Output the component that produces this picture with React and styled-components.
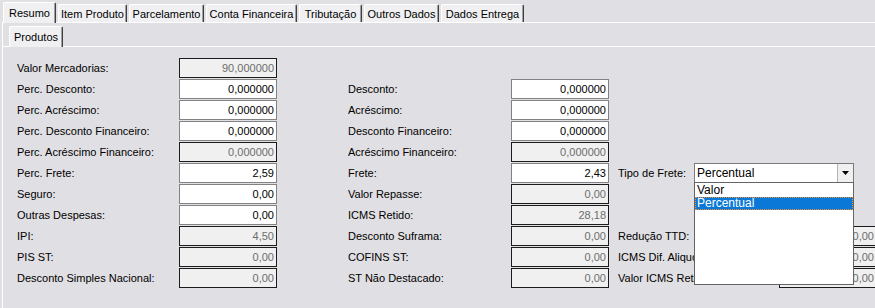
import React from "react";
import styled, { createGlobalStyle } from "styled-components";

const GlobalStyle = createGlobalStyle`
  html, body {
    margin: 0;
    padding: 0;
    background: #e0dfe3;
  }
  body {
    font-family: "Liberation Sans", Arial, sans-serif;
    font-size: 11px;
    color: #000;
  }
`;

const tabs = [
  { title: "Resumo", w: 53, active: true },
  { title: "Item Produto", w: 69 },
  { title: "Parcelamento", w: 75 },
  { title: "Conta Financeira", w: 91 },
  { title: "Tributação", w: 63 },
  { title: "Outros Dados", w: 75 },
  { title: "Dados Entrega", w: 83 },
];

// [row, column group, label, value, disabled]
const fields = [
  [1, 0, "Valor Mercadorias:", "90,000000", true],
  [2, 0, "Perc. Desconto:", "0,000000"],
  [3, 0, "Perc. Acréscimo:", "0,000000"],
  [4, 0, "Perc. Desconto Financeiro:", "0,000000"],
  [5, 0, "Perc. Acréscimo Financeiro:", "0,000000", true],
  [6, 0, "Perc. Frete:", "2,59"],
  [7, 0, "Seguro:", "0,00"],
  [8, 0, "Outras Despesas:", "0,00"],
  [9, 0, "IPI:", "4,50", true],
  [10, 0, "PIS ST:", "0,00", true],
  [11, 0, "Desconto Simples Nacional:", "0,00", true],
  [2, 1, "Desconto:", "0,000000"],
  [3, 1, "Acréscimo:", "0,000000"],
  [4, 1, "Desconto Financeiro:", "0,000000"],
  [5, 1, "Acréscimo Financeiro:", "0,000000", true],
  [6, 1, "Frete:", "2,43"],
  [7, 1, "Valor Repasse:", "0,00", true],
  [8, 1, "ICMS Retido:", "28,18", true],
  [9, 1, "Desconto Suframa:", "0,00", true],
  [10, 1, "COFINS ST:", "0,00", true],
  [11, 1, "ST Não Destacado:", "0,00", true],
  [9, 2, "Redução TTD:", "0,00", true],
  [10, 2, "ICMS Dif. Aliquota:", "0,00", true],
  [11, 2, "Valor ICMS Retido:", "0,00", true],
];

const App = () => {
  return (
    <>
      <GlobalStyle />
      <Window>
        <TabBar>
          {tabs.map((t) => (
            <Tab key={t.title} $w={t.w} $active={t.active}>
              {t.title}
            </Tab>
          ))}
        </TabBar>

        <Page>
          <SubTabBar>
            <Tab $w={54} $active>
              Produtos
            </Tab>
          </SubTabBar>

          <SubPage>
            <FormGrid>
              {fields.map(([row, group, label, value, disabled]) => (
                <React.Fragment key={label}>
                  <Label $row={row} $col={group * 3 + 1}>
                    {label}
                  </Label>
                  <Edit $row={row} $col={group * 3 + 2} $disabled={disabled}>
                    {value}
                  </Edit>
                </React.Fragment>
              ))}

              <ComboField $row={6}>
                <ComboLabel>Tipo de Frete:</ComboLabel>
                <Combo>
                  <ComboText>Percentual</ComboText>
                  <ComboButton>
                    <svg width="7" height="4" viewBox="0 0 7 4">
                      <polygon points="0,0 7,0 3.5,4" fill="#000" />
                    </svg>
                  </ComboButton>
                  <DropList>
                    <DropItem>Valor</DropItem>
                    <DropItem $selected>Percentual</DropItem>
                  </DropList>
                </Combo>
              </ComboField>
            </FormGrid>
          </SubPage>
        </Page>
      </Window>
    </>
  );
};

const Window = styled.div`
  width: 875px;
  height: 308px;
  overflow: hidden;
  background: #e0dfe3;
`;

const TabBar = styled.div`
  height: 22px;
  padding-left: 3px;
  box-sizing: border-box;
  display: flex;
  align-items: flex-end;
  gap: 2px;
`;

const Tab = styled.div`
  position: relative;
  z-index: 1;
  width: ${(p) => p.$w}px;
  height: ${(p) => (p.$active ? 21 : 18)}px;
  margin-bottom: ${(p) => (p.$active ? -1 : 0)}px;
  box-sizing: border-box;
  border-top: 1px solid #fff;
  border-left: 1px solid #fff;
  border-right: 1px solid #404040;
  border-radius: 2px 2px 0 0;
  box-shadow: inset -1px 0 0 #a0a0a0;
  background: #f0f0f2;
  display: flex;
  justify-content: center;
  align-items: center;
  white-space: nowrap;
  padding-bottom: ${(p) => (p.$active ? 1 : 0)}px;
`;

const Page = styled.div`
  height: 286px;
  margin-left: 2px;
  border-top: 1px solid #fff;
  border-left: 1px solid #fff;
`;

const SubTabBar = styled.div`
  height: 23px;
  padding-left: 6px;
  box-sizing: border-box;
  display: flex;
  align-items: flex-end;
`;

const SubPage = styled.div`
  border-top: 1px solid #fff;
`;

const FormGrid = styled.div`
  padding: 11px 0 0 14px;
  display: grid;
  grid-template-columns: 162px 98px 71px 163px 98px 9px 161px 98px;
  grid-template-rows: repeat(11, 20px);
  row-gap: 1px;
`;

const Label = styled.div`
  grid-row: ${(p) => p.$row};
  grid-column: ${(p) => p.$col};
  display: flex;
  align-items: center;
  white-space: nowrap;
  overflow: hidden;
`;

const Edit = styled.div`
  grid-row: ${(p) => p.$row};
  grid-column: ${(p) => p.$col};
  box-sizing: border-box;
  padding-right: 2px;
  border: 1px solid ${(p) => (p.$disabled ? "#1c1c1c" : "#828282")};
  background: ${(p) => (p.$disabled ? "#f0f0f0" : "#fff")};
  color: ${(p) => (p.$disabled ? "#6d6d6d" : "#000")};
  display: flex;
  justify-content: flex-end;
  align-items: center;
`;

const ComboField = styled.div`
  grid-row: ${(p) => p.$row};
  grid-column: 7 / 9;
  display: flex;
  align-items: center;
`;

const ComboLabel = styled.div`
  width: 76px;
  white-space: nowrap;
`;

const Combo = styled.div`
  position: relative;
  width: 160px;
  height: 20px;
  box-sizing: border-box;
  border: 1px solid #7a7a7a;
  background: #fff;
  display: flex;
  align-items: center;
`;

const ComboText = styled.div`
  flex: 1;
  padding-left: 2px;
  font-size: 12px;
`;

const ComboButton = styled.div`
  width: 16px;
  height: 100%;
  box-sizing: border-box;
  border-left: 1px solid #b4b4b4;
  background: #f0f0f0;
  display: flex;
  justify-content: center;
  align-items: center;
`;

const DropList = styled.div`
  position: absolute;
  z-index: 5;
  top: 18px;
  left: -1px;
  width: 160px;
  height: 103px;
  box-sizing: border-box;
  border: 1px solid #646464;
  background: #fff;
  padding-top: 1px;
`;

const DropItem = styled.div`
  height: 13px;
  box-sizing: border-box;
  padding-left: 2px;
  font-size: 12px;
  line-height: 12px;
  color: ${(p) => (p.$selected ? "#fff" : "#000")};
  background: ${(p) => (p.$selected ? "#0a78d7" : "transparent")};
  outline: ${(p) => (p.$selected ? "1px dotted #f09030" : "none")};
  outline-offset: -1px;
`;

export default App;
